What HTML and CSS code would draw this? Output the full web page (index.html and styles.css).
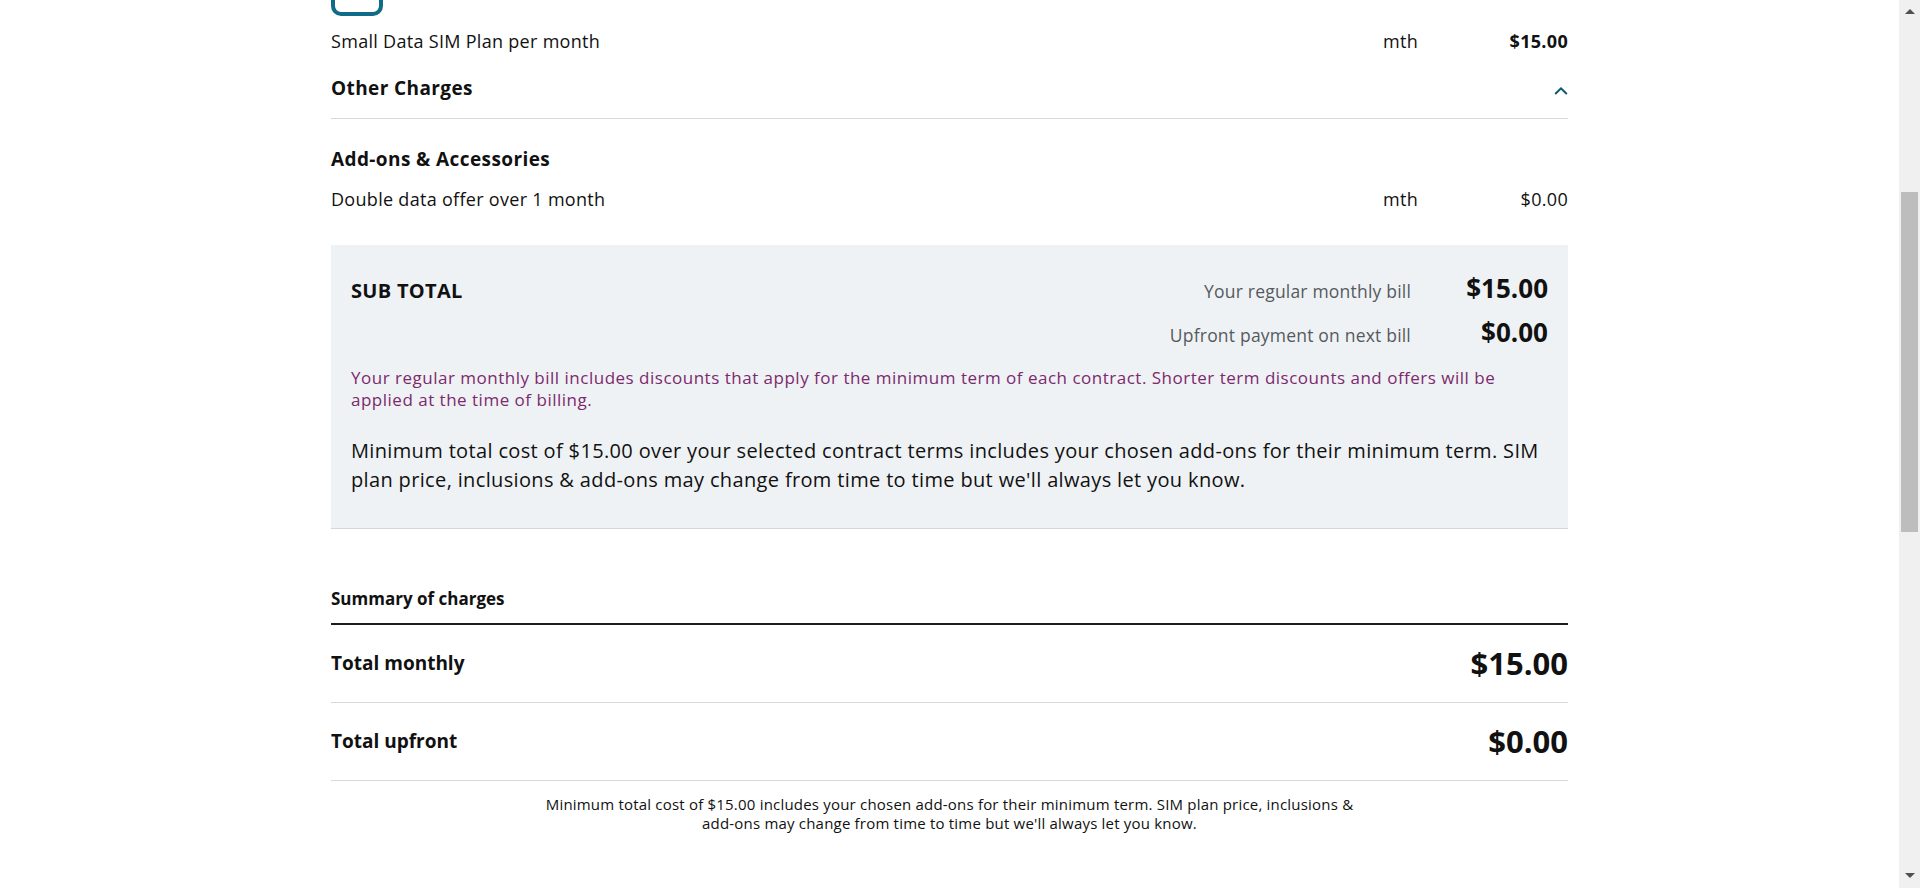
FILE: index.html
```html
<!DOCTYPE html>
<html lang="en">
<head>
<meta charset="utf-8">
<title>Order summary</title>
<link rel="stylesheet" href="styles.css">
</head>
<body>
<main class="page">
  <section class="plan">
    <div class="plan-icon"></div>
    <div class="charge-row">
      <span class="charge-name">Small Data SIM Plan per month</span>
      <span class="charge-unit">mth</span>
      <span class="charge-price strong">$15.00</span>
    </div>
  </section>

  <section class="group">
    <div class="group-head">
      <h2 class="group-title">Other Charges</h2>
      <svg class="chevron" width="14" height="8" viewBox="0 0 14 8" aria-hidden="true"><path d="M1.2 7 L7 1.4 L12.8 7" fill="none" stroke="currentColor" stroke-width="2"/></svg>
    </div>
    <div class="group-body">
      <h3 class="sub-title">Add-ons &amp; Accessories</h3>
      <div class="charge-row">
        <span class="charge-name">Double data offer over 1 month</span>
        <span class="charge-unit">mth</span>
        <span class="charge-price">$0.00</span>
      </div>
    </div>
  </section>

  <section class="subtotal">
    <div class="subtotal-head">
      <h2 class="subtotal-title">SUB TOTAL</h2>
      <dl class="subtotal-lines">
        <dt>Your regular monthly bill</dt><dd>$15.00</dd>
        <dt>Upfront payment on next bill</dt><dd>$0.00</dd>
      </dl>
    </div>
    <p class="discount-note">Your regular monthly bill includes discounts that apply for the minimum term of each contract. Shorter term discounts and offers will be applied at the time of billing.</p>
    <p class="min-cost">Minimum total cost of $15.00 over your selected contract terms includes your chosen add-ons for their minimum term. SIM plan price, inclusions &amp; add-ons may change from time to time but we'll always let you know.</p>
  </section>

  <section class="summary">
    <h2 class="summary-title">Summary of charges</h2>
    <div class="total-row">
      <span class="total-label">Total monthly</span>
      <span class="total-price">$15.00</span>
    </div>
    <div class="total-row">
      <span class="total-label">Total upfront</span>
      <span class="total-price">$0.00</span>
    </div>
  </section>

  <p class="footnote">Minimum total cost of $15.00 includes your chosen add-ons for their minimum term. SIM plan price, inclusions &amp; add-ons may change from time to time but we'll always let you know.</p>
</main>

<div class="scrollbar" aria-hidden="true">
  <span class="sb-button sb-up"><svg width="10" height="5" viewBox="0 0 10 5"><path d="M0 5 L5 0 L10 5 Z" fill="#505050"/></svg></span>
  <span class="sb-track"><span class="sb-thumb"></span></span>
  <span class="sb-button sb-down"><svg width="10" height="5" viewBox="0 0 10 5"><path d="M0 0 L5 5 L10 0 Z" fill="#505050"/></svg></span>
</div>
<script src="script.js"></script>
</body>
</html>
```

FILE: styles.css
```css
html, body {
  margin: 0;
  padding: 0;
  background: #ffffff;
}

body {
  font-family: "Open Sans", "Noto Sans", sans-serif;
  color: #111111;
  padding-right: 21px;
}

.page {
  width: 1237px;
  margin: 0 auto;
  padding: 427px 0 942px;
}

/* plan */
.plan-icon {
  width: 52px;
  height: 48px;
  box-sizing: border-box;
  border: 4px solid #0f6b87;
  border-radius: 10px;
  margin-bottom: 13px;
}

.charge-row {
  display: grid;
  grid-template-columns: 1fr 100px 85px;
  align-items: baseline;
  font-size: 18px;
  line-height: 24px;
  letter-spacing: 0.3px;
}

.charge-unit {
  text-align: left;
}

.charge-price {
  text-align: right;
}

.strong {
  font-weight: 700;
}

/* other charges group */
.group-head {
  display: flex;
  align-items: center;
  justify-content: space-between;
  padding: 23px 0 18px;
  border-bottom: 1px solid #d3dae0;
}

.group-title,
.sub-title {
  margin: 0;
  font-size: 19px;
  line-height: 24px;
  font-weight: 700;
  letter-spacing: 0.4px;
}

.chevron {
  color: #0b5873;
  margin-top: 5px;
}

.sub-title {
  margin-top: 28px;
}

.group-body .charge-row {
  margin-top: 16px;
}

/* sub total */
.subtotal {
  margin-top: 34px;
  background: #eff2f5;
  border-bottom: 1px solid #d3d7db;
  padding: 28px 20px 34px;
}

.subtotal-head {
  display: flex;
  justify-content: space-between;
  align-items: baseline;
}

.subtotal-title {
  margin: 0;
  font-size: 20px;
  line-height: 24px;
  font-weight: 700;
  letter-spacing: 0.3px;
}

.subtotal-lines {
  margin: 0;
  display: grid;
  grid-template-columns: max-content 137px;
  row-gap: 14px;
  align-items: baseline;
  justify-items: end;
}

.subtotal-lines dt {
  font-size: 17.5px;
  line-height: 24px;
  letter-spacing: 0.2px;
  color: #555a5e;
}

.subtotal-lines dd {
  margin: 0;
  font-size: 26px;
  line-height: 30px;
  font-weight: 700;
}

.discount-note {
  margin: 20px 0 0;
  font-size: 17px;
  line-height: 22px;
  letter-spacing: 0.5px;
  color: #7b2a6c;
}

.min-cost {
  margin: 25px 0 0;
  font-size: 20px;
  line-height: 29px;
  letter-spacing: 0.35px;
}

/* summary */
.summary {
  margin-top: 60px;
}

.summary-title {
  margin: 0;
  font-size: 17px;
  line-height: 20px;
  font-weight: 700;
  padding-bottom: 14px;
  border-bottom: 2px solid #1c1c1c;
}

.total-row {
  display: flex;
  justify-content: space-between;
  align-items: center;
  padding: 20px 0 21px;
  border-bottom: 1px solid #d3dae0;
}

.total-label {
  font-size: 19px;
  line-height: 24px;
  font-weight: 700;
}

.total-price {
  font-size: 31px;
  line-height: 36px;
  font-weight: 700;
}

.footnote {
  max-width: 830px;
  margin: 0 auto;
  padding-top: 14px;
  text-align: center;
  font-size: 15px;
  line-height: 19px;
  letter-spacing: 0.2px;
}

/* window scrollbar (drawn, the page is scrolled part way) */
.scrollbar {
  position: fixed;
  top: 0;
  right: 0;
  width: 21px;
  height: 100vh;
  background: #f0f0f0;
  display: flex;
  flex-direction: column;
}

.sb-button {
  height: 21px;
  display: flex;
  align-items: center;
  justify-content: center;
}

.sb-button svg {
  display: block;
}

.sb-up svg {
  margin-top: 1px;
}

.sb-down svg {
  margin-top: -4px;
}

.sb-track {
  flex: 1;
  display: flex;
  flex-direction: column;
}

.sb-thumb {
  margin: 171px 2px 0;
  height: 340px;
  background: #bdbdbd;
}
```

FILE: script.js
```js
if ('scrollRestoration' in history) {
  history.scrollRestoration = 'manual';
}
function jumpToSummary() {
  window.scrollTo(0, 459);
}
jumpToSummary();
window.addEventListener('load', jumpToSummary);
```
